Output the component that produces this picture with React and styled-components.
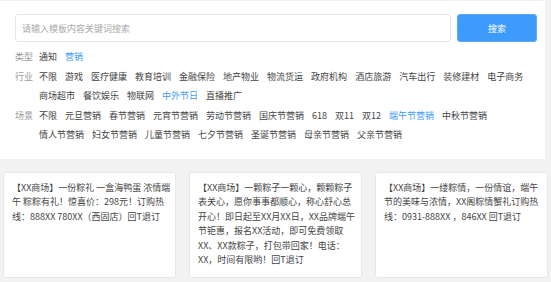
import React from 'react';
import styled, {createGlobalStyle} from 'styled-components';

const GlobalStyle = createGlobalStyle`
  body {
    margin: 0;
    background: #f2f2f2;
    font-family: "Noto Sans CJK SC", "Liberation Sans", sans-serif;
  }
`;

const filters = [
  {
    label: '类型',
    items: ['通知', '营销'],
    active: '营销',
  },
  {
    label: '行业',
    items: ['不限', '游戏', '医疗健康', '教育培训', '金融保险', '地产物业', '物流货运', '政府机构', '酒店旅游', '汽车出行', '装修建材', '电子商务', '商场超市', '餐饮娱乐', '物联网', '中外节日', '直播推广'],
    active: '中外节日',
  },
  {
    label: '场景',
    items: ['不限', '元旦营销', '春节营销', '元宵节营销', '劳动节营销', '国庆节营销', '618', '双11', '双12', '端午节营销', '中秋节营销', '情人节营销', '妇女节营销', '儿童节营销', '七夕节营销', '圣诞节营销', '母亲节营销', '父亲节营销'],
    active: '端午节营销',
  },
];

const templates = [
  '【XX商场】一份粽礼 一盒海鸭蛋 浓情端午 粽粽有礼！惊喜价：298元！订购热线：888XX 780XX（西固店）回T退订',
  '【XX商场】一颗粽子一颗心，颗颗粽子表关心，愿你事事都顺心，称心舒心总开心！即日起至XX月XX日，XX品牌端午节钜惠，报名XX活动，即可免费领取XX、XX款粽子，打包带回家！电话：XX，时间有限哟！回T退订',
  '【XX商场】一缕粽情，一份情谊，端午节的美味与浓情，XX阁粽情蟹礼订购热线：0931-888XX ，846XX 回T退订',
];

const Page = styled.div`
  display: flex;
  flex-direction: column;
  gap: 13px;
  padding-top: 1px;
`;

const Panel = styled.div`
  width: 545px;
  box-sizing: border-box;
  background: #fff;
  padding: 13px 8px 14px 15px;
`;

const SearchRow = styled.div`
  display: flex;
  gap: 6px;
  height: 28px;
  margin-bottom: 5px;
`;

const SearchInput = styled.input`
  flex: 1;
  box-sizing: border-box;
  border: 1px solid #e6e6e6;
  border-radius: 3px;
  padding: 0 6px;
  font-family: inherit;
  font-size: 9px;
  color: #333;
  outline: none;

  &::placeholder {
    color: #aaa;
  }
`;

const SearchButton = styled.button`
  width: 80px;
  border: 1px solid #5aaafc;
  border-radius: 3px;
  background: #3d9bfb;
  color: #fff;
  font-family: inherit;
  font-size: 9px;
  cursor: pointer;
`;

const FilterRow = styled.div`
  display: flex;
  font-size: 9px;
  line-height: 19.5px;
`;

const FilterLabel = styled.div`
  width: 24px;
  flex-shrink: 0;
  color: #999;
`;

const FilterItems = styled.div`
  display: flex;
  flex-wrap: wrap;
  column-gap: 8px;
  flex: 1;
`;

const FilterItem = styled.span`
  color: ${p => (p.$active ? '#3d9bfb' : '#444')};
  white-space: nowrap;
  cursor: pointer;
`;

const CardGrid = styled.div`
  display: grid;
  grid-template-columns: repeat(3, 1fr);
  gap: 13px;
  width: 545px;
  margin-left: 3px;
`;

const Card = styled.div`
  height: 106px;
  box-sizing: border-box;
  background: #fff;
  border: 1px solid #e8e8e8;
  border-radius: 3px;
  padding: 8px 4.5px 8px 8px;
  font-size: 9px;
  line-height: 14.5px;
  color: #444;
  text-spacing-trim: space-all;
`;

const App = () => {
  return (
    <Page>
      <GlobalStyle />
      <Panel>
        <SearchRow>
          <SearchInput placeholder="请输入模板内容关键词搜索" />
          <SearchButton>搜索</SearchButton>
        </SearchRow>
        {
          filters.map(({label, items, active}) => (
            <FilterRow key={label}>
              <FilterLabel>{label}</FilterLabel>
              <FilterItems>
                {items.map(item => (
                  <FilterItem key={item} $active={item === active}>{item}</FilterItem>
                ))}
              </FilterItems>
            </FilterRow>
          ))
        }
      </Panel>
      <CardGrid>
        {templates.map(text => <Card key={text}>{text}</Card>)}
      </CardGrid>
    </Page>
  );
};

export default App;
